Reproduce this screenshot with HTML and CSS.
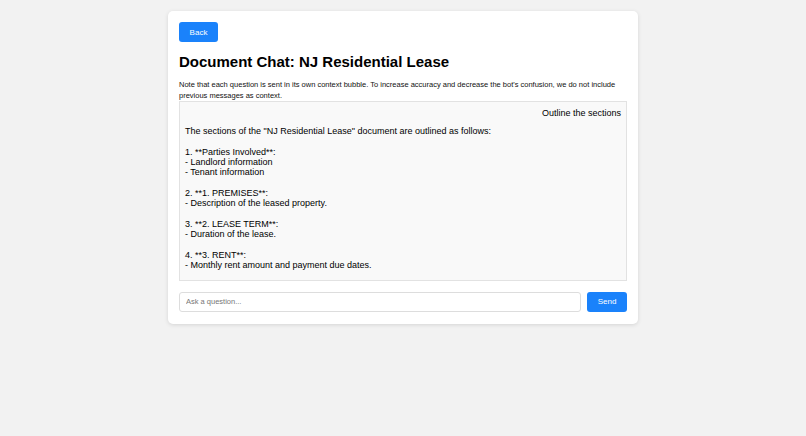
FILE: index.html
```html
<!DOCTYPE html>
<html>
<head>
<meta charset="utf-8">
<link rel="stylesheet" href="styles.css">
</head>
<body>
<div class="card">
  <button class="btn back">Back</button>
  <h1 class="title">Document Chat: NJ Residential Lease</h1>
  <p class="note">Note that each question is sent in its own context bubble. To increase accuracy and decrease the bot's confusion, we do not include previous messages as context.</p>
  <div class="chat">
    <div class="q">Outline the sections</div>
    <div class="a">The sections of the "NJ Residential Lease" document are outlined as follows:<br><br>1. **Parties Involved**:<br>- Landlord information<br>- Tenant information<br><br>2. **1. PREMISES**:<br>- Description of the leased property.<br><br>3. **2. LEASE TERM**:<br>- Duration of the lease.<br><br>4. **3. RENT**:<br>- Monthly rent amount and payment due dates.</div>
  </div>
  <div class="ask">
    <input class="input" type="text" placeholder="Ask a question...">
    <button class="btn send">Send</button>
  </div>
</div>
</body>
</html>
```
FILE: styles.css
```css
html, body { margin: 0; padding: 0; }
body {
  background: #f2f2f2;
  font-family: "Liberation Sans", Arial, sans-serif;
  color: #000;
  width: 806px;
  height: 436px;
}
.card {
  width: 448px;
  margin: 11px 0 0 168px;
  background: #fff;
  border-radius: 5px;
  box-shadow: 0 1px 4px rgba(0,0,0,0.12);
  padding: 11px 11px 12px 11px;
}
.btn {
  background: #1a82fb;
  color: #fff;
  border: none;
  border-radius: 3px;
  font-family: "Liberation Sans", Arial, sans-serif;
  font-size: 8px;
  padding: 0;
  height: 20px;
  display: block;
}
.back { width: 39px; }
.title {
  font-size: 15px;
  font-weight: bold;
  margin: 11px 0 0 0;
  line-height: 17px;
}
.note {
  font-size: 7.5px;
  line-height: 10.5px;
  margin: 10px 0 0 0;
  color: #111;
}
.chat {
  margin-top: 0;
  background: #f9f9f9;
  border: 1px solid #e2e2e2;
  padding: 6px 5px 9px 5px;
}
.q {
  text-align: right;
  font-size: 9px;
  line-height: 11px;
}
.a {
  font-size: 9px;
  line-height: 10.35px;
  margin-top: 7px;
}
.ask {
  display: flex;
  gap: 6px;
  margin-top: 11px;
}
.input {
  flex: 1;
  height: 20px;
  box-sizing: border-box;
  border: 1px solid #ddd;
  border-radius: 3px;
  padding: 0 6px;
  font-family: "Liberation Sans", Arial, sans-serif;
  font-size: 7.5px;
  outline: none;
}
.input::placeholder { color: #777; }
.send { width: 40px; }
```
